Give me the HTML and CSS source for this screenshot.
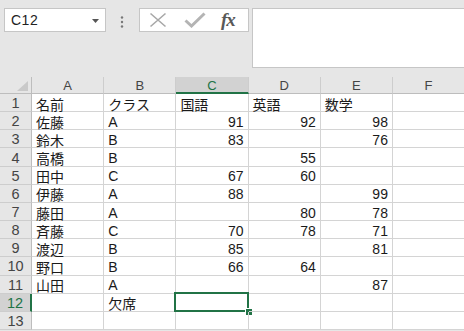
FILE: index.html
```html
<!DOCTYPE html>
<html lang="ja">
<head>
<meta charset="utf-8">
<link rel="stylesheet" href="styles.css">
</head>
<body>
<div class="app">
  <div class="fbar">
    <div class="namebox"><span class="ref">C12</span><svg class="dd" width="7" height="4" viewBox="0 0 7 4"><path d="M0 0H7L3.5 4Z" fill="#555"/></svg></div>
    <svg class="dots" width="4" height="12" viewBox="0 0 4 12"><circle cx="2" cy="1.5" r="1.2" fill="#777"/><circle cx="2" cy="6" r="1.2" fill="#777"/><circle cx="2" cy="10.5" r="1.2" fill="#777"/></svg>
    <div class="fxbox">
      <svg class="ico" width="18" height="16" viewBox="0 0 18 16"><path d="M1.5 1.5L16.5 14.5M16.5 1.5L1.5 14.5" stroke="#a8a8a8" stroke-width="1.6" fill="none"/></svg>
      <svg class="ico chk" width="22" height="16" viewBox="0 0 22 16"><path d="M1.5 8.5L7.5 14L20.5 1.5" stroke="#b4b4b4" stroke-width="3" fill="none"/></svg>
      <span class="fx">fx</span>
    </div>
    <div class="finput"></div>
  </div>
  <div class="sheet">
    <div class="corner"><svg width="11" height="10" viewBox="0 0 11 10"><path d="M11 0V10H0Z" fill="#c9c9c9"/></svg></div>
    <div class="ch">A</div><div class="ch">B</div><div class="ch sel">C</div><div class="ch">D</div><div class="ch">E</div><div class="ch">F</div>

    <div class="rh">1</div><div class="c">名前</div><div class="c">クラス</div><div class="c">国語</div><div class="c">英語</div><div class="c">数学</div><div class="c"></div>
    <div class="rh">2</div><div class="c">佐藤</div><div class="c">A</div><div class="c n">91</div><div class="c n">92</div><div class="c n">98</div><div class="c"></div>
    <div class="rh">3</div><div class="c">鈴木</div><div class="c">B</div><div class="c n">83</div><div class="c n"></div><div class="c n">76</div><div class="c"></div>
    <div class="rh">4</div><div class="c">高橋</div><div class="c">B</div><div class="c n"></div><div class="c n">55</div><div class="c n"></div><div class="c"></div>
    <div class="rh">5</div><div class="c">田中</div><div class="c">C</div><div class="c n">67</div><div class="c n">60</div><div class="c n"></div><div class="c"></div>
    <div class="rh">6</div><div class="c">伊藤</div><div class="c">A</div><div class="c n">88</div><div class="c n"></div><div class="c n">99</div><div class="c"></div>
    <div class="rh">7</div><div class="c">藤田</div><div class="c">A</div><div class="c n"></div><div class="c n">80</div><div class="c n">78</div><div class="c"></div>
    <div class="rh">8</div><div class="c">斉藤</div><div class="c">C</div><div class="c n">70</div><div class="c n">78</div><div class="c n">71</div><div class="c"></div>
    <div class="rh">9</div><div class="c">渡辺</div><div class="c">B</div><div class="c n">85</div><div class="c n"></div><div class="c n">81</div><div class="c"></div>
    <div class="rh">10</div><div class="c">野口</div><div class="c">B</div><div class="c n">66</div><div class="c n">64</div><div class="c n"></div><div class="c"></div>
    <div class="rh">11</div><div class="c">山田</div><div class="c">A</div><div class="c n"></div><div class="c n"></div><div class="c n">87</div><div class="c"></div>
    <div class="rh sel">12</div><div class="c"></div><div class="c">欠席</div><div class="c active"><span class="selbox"></span><span class="handle"></span></div><div class="c"></div><div class="c"></div><div class="c"></div>
    <div class="rh">13</div><div class="c"></div><div class="c"></div><div class="c"></div><div class="c"></div><div class="c"></div><div class="c"></div>
  </div>
</div>
</body>
</html>
```

FILE: styles.css
```css
html, body {
  margin: 0;
  padding: 0;
  background: #e6e6e6;
  overflow: hidden;
}
.app {
  width: 464px;
  height: 331px;
  overflow: hidden;
  font-family: "Liberation Sans", "Noto Sans CJK JP", sans-serif;
}
.fbar {
  height: 77px;
  box-sizing: border-box;
  padding: 8px 0 0 4px;
  display: flex;
  align-items: flex-start;
}
.namebox {
  width: 102px;
  height: 24px;
  box-sizing: border-box;
  background: #fff;
  border: 1px solid #c6c6c6;
  display: flex;
  align-items: center;
  justify-content: space-between;
  padding: 0 6px 0 6px;
}
.ref {
  font-size: 14px;
  color: #222;
  letter-spacing: 0.5px;
}
.dd { margin-top: 1px; }
.dots {
  margin: 8px 0 0 14px;
}
.fxbox {
  margin-left: 15px;
  width: 110px;
  height: 24px;
  box-sizing: border-box;
  background: #fff;
  border: 1px solid #c6c6c6;
  display: flex;
  align-items: center;
  padding-left: 9px;
}
.ico { display: block; }
.chk { margin-left: 17px; }
.fx {
  margin-left: 15px;
  font-family: "Liberation Serif", serif;
  font-style: italic;
  font-weight: bold;
  font-size: 19px;
  color: #595959;
  letter-spacing: -1px;
  line-height: 20px;
}
.finput {
  margin-left: 3px;
  flex: 1;
  height: 60px;
  box-sizing: border-box;
  background: #fff;
  border: 1px solid #c6c6c6;
  border-right: none;
}
.sheet {
  display: grid;
  grid-template-columns: 32px repeat(6, 72.2px);
  grid-template-rows: 17px repeat(13, 18.17px);
  background: #fff;
}
.corner {
  background: #e6e6e6;
  border-right: 1px solid #bdbdbd;
  border-bottom: 1px solid #bdbdbd;
  box-sizing: border-box;
  display: flex;
  align-items: flex-end;
  justify-content: flex-end;
  padding: 0 3px 2px 0;
}
.corner svg { display: block; }
.ch {
  background: #e6e6e6;
  box-sizing: border-box;
  border-right: 1px solid #cdcdcd;
  border-bottom: 1px solid #bdbdbd;
  display: flex;
  align-items: center;
  justify-content: center;
  font-size: 13px;
  color: #444;
}
.ch.sel {
  background: #d2d2d2;
  color: #217346;
  border-bottom: 2px solid #217346;
  padding-top: 1px;
}
.rh {
  background: #e6e6e6;
  box-sizing: border-box;
  border-right: 1px solid #bdbdbd;
  border-bottom: 1px solid #cdcdcd;
  display: flex;
  align-items: center;
  justify-content: center;
  font-size: 14.5px;
  color: #444;
  padding-top: 1px;
}
.rh.sel {
  background: #d2d2d2;
  color: #217346;
  border-right: 2px solid #217346;
}
.c {
  position: relative;
  box-sizing: border-box;
  border-right: 1px solid #d4d4d4;
  border-bottom: 1px solid #d4d4d4;
  display: flex;
  align-items: center;
  padding: 2px 4px 0 4px;
  font-size: 14px;
  color: #1a1a1a;
  white-space: nowrap;
}
.c.n {
  justify-content: flex-end;
}
.selbox {
  position: absolute;
  left: -2px;
  top: -2px;
  right: -1px;
  bottom: -1px;
  border: 2px solid #217346;
}
.handle {
  position: absolute;
  right: -5px;
  bottom: -5px;
  width: 6px;
  height: 6px;
  background: #217346;
  border: 1px solid #fff;
}
```
